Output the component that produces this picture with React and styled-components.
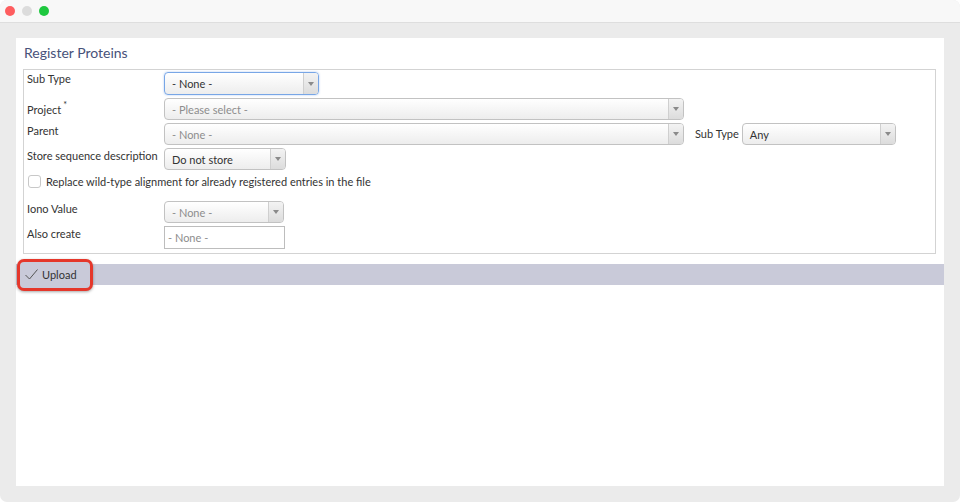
import React from 'react';
import styled, {createGlobalStyle} from 'styled-components';

const GlobalStyle = createGlobalStyle`
	html, body {
		margin: 0;
		padding: 0;
		background: #ffffff;
	}
	body {
		font-family: Lato, "Noto Sans", sans-serif;
		color: #333;
	}
`

const Window = styled.div`
	width: 960px;
	height: 502px;
	display: flex;
	flex-direction: column;
	border-radius: 7px;
	overflow: hidden;
	background: #ebebeb;
`

const TitleBar = styled.div`
	height: 22px;
	flex-shrink: 0;
	display: flex;
	align-items: center;
	gap: 7px;
	padding-left: 5px;
	background: #f8f8f8;
	border-bottom: 1px solid #dedede;
`

const Dot = styled.span`
	width: 10px;
	height: 10px;
	border-radius: 50%;
	background: ${props => props.color};
`

const Stage = styled.div`
	flex: 1;
	padding: 15px 16px 16px;
	display: flex;
`

const Panel = styled.div`
	flex: 1;
	background: #fff;
	display: flex;
	flex-direction: column;
`

const Title = styled.h1`
	margin: 0;
	padding: 6px 8px 0;
	height: 25px;
	font-size: 14px;
	font-weight: 400;
	color: #48527a;
`

const FieldSet = styled.div`
	margin: 0 8px 0 7px;
	border: 1px solid #d3d3d3;
	padding: 2px 3px 4px;
	display: flex;
	flex-direction: column;
	gap: 3px;
`

const Row = styled.div`
	display: flex;
	align-items: flex-start;
	min-height: 22px;
	margin-top: ${props => props.$top || 0}px;
`

const Label = styled.div`
	width: 137px;
	flex-shrink: 0;
	font-size: 11px;
	line-height: 14px;
	padding-top: ${props => props.$pt ?? 1}px;
	color: #333;

	sup {
		font-size: 9px;
		position: relative;
		top: -1px;
		margin-left: 2px;
	}
`

const SideLabel = styled.div`
	font-size: 11px;
	margin: 0 3px 0 11px;
	line-height: 22px;
	color: #333;
`

const SelectBox = styled.div`
	width: ${props => props.$w}px;
	height: ${props => props.$focus ? 23 : 22}px;
	box-sizing: border-box;
	display: flex;
	align-items: stretch;
	border: 1px solid ${props => props.$focus ? '#78a6e6' : '#c2c2c2'};
	border-radius: 4px;
	background: linear-gradient(#ffffff, #ededed);
	box-shadow: ${props => props.$focus ? '0 0 2px rgba(80,140,230,0.5)' : 'none'};
	overflow: hidden;
`

const SelectText = styled.span`
	flex: 1;
	padding-left: 7px;
	font-size: 11px;
	display: flex;
	align-items: center;
	color: ${props => props.$muted ? '#8d8d8d' : '#333'};
`

const Arrow = styled.span`
	width: 14px;
	border-left: 1px solid #cfcfcf;
	background: linear-gradient(#f3f3f3, #dcdcdc);
	display: flex;
	align-items: center;
	justify-content: center;

	&::after {
		content: '';
		border-left: 3px solid transparent;
		border-right: 3px solid transparent;
		border-top: 4px solid #8a8a8a;
	}
`

const TextInput = styled.div`
	width: 121px;
	height: 23px;
	box-sizing: border-box;
	border: 1px solid #bdbdbd;
	font-size: 11px;
	padding-left: 3px;
	display: flex;
	align-items: center;
	color: #8d8d8d;
`

const CheckRow = styled.label`
	display: flex;
	align-items: center;
	gap: 5px;
	padding: 2px 0 0 1px;
	font-size: 11px;
	color: #333;
`

const Check = styled.span`
	width: 13px;
	height: 13px;
	box-sizing: border-box;
	border: 1px solid #c8c8c8;
	border-radius: 3px;
	background: #fff;
`

const ActionBar = styled.div`
	margin-top: 10px;
	height: 21px;
	background: #c9cad9;
	display: flex;
	align-items: center;
`

const UploadButton = styled.button`
	margin-left: 1px;
	width: 76px;
	height: 32px;
	box-sizing: border-box;
	border: 3px solid #e5372b;
	border-radius: 7px;
	background: #c9cad9;
	box-shadow: 0 1px 3px rgba(0,0,0,0.35);
	display: flex;
	align-items: center;
	gap: 4px;
	padding: 0 0 0 5px;
	font-family: inherit;
	font-size: 11px;
	color: #333;
`

const Select = ({w, text, muted, focus}) => (
	<SelectBox $w={w} $focus={focus}>
		<SelectText $muted={muted}>{text}</SelectText>
		<Arrow />
	</SelectBox>
)

const App = () => {
	return (
	<Window>
		<GlobalStyle />
		<TitleBar>
			<Dot color="#fe5d5f" />
			<Dot color="#dcdcdc" />
			<Dot color="#1ec83f" />
		</TitleBar>
		<Stage>
			<Panel>
				<Title>Register Proteins</Title>
				<FieldSet>
					<Row>
						<Label $pt={0}>Sub Type</Label>
						<Select w={155} text="- None -" focus />
					</Row>
					<Row>
						<Label>Project<sup>*</sup></Label>
						<Select w={520} text="- Please select -" muted />
					</Row>
					<Row>
						<Label>Parent</Label>
						<Select w={520} text="- None -" muted />
						<SideLabel>Sub Type</SideLabel>
						<Select w={154} text="Any" />
					</Row>
					<Row>
						<Label>Store sequence description</Label>
						<Select w={122} text="Do not store" />
					</Row>
					<CheckRow>
						<Check />
						Replace wild-type alignment for already registered entries in the file
					</CheckRow>
					<Row $top={10}>
						<Label>Iono Value</Label>
						<Select w={120} text="- None -" muted />
					</Row>
					<Row>
						<Label>Also create</Label>
						<TextInput>- None -</TextInput>
					</Row>
				</FieldSet>
				<ActionBar>
					<UploadButton>
						<svg width="13" height="11" viewBox="0 0 13 11">
							<path d="M0.5 6 L4.5 10 L12.5 0.5" fill="none" stroke="#555" strokeWidth="1" />
						</svg>
						Upload
					</UploadButton>
				</ActionBar>
			</Panel>
		</Stage>
	</Window>
	)
}

export default App;
